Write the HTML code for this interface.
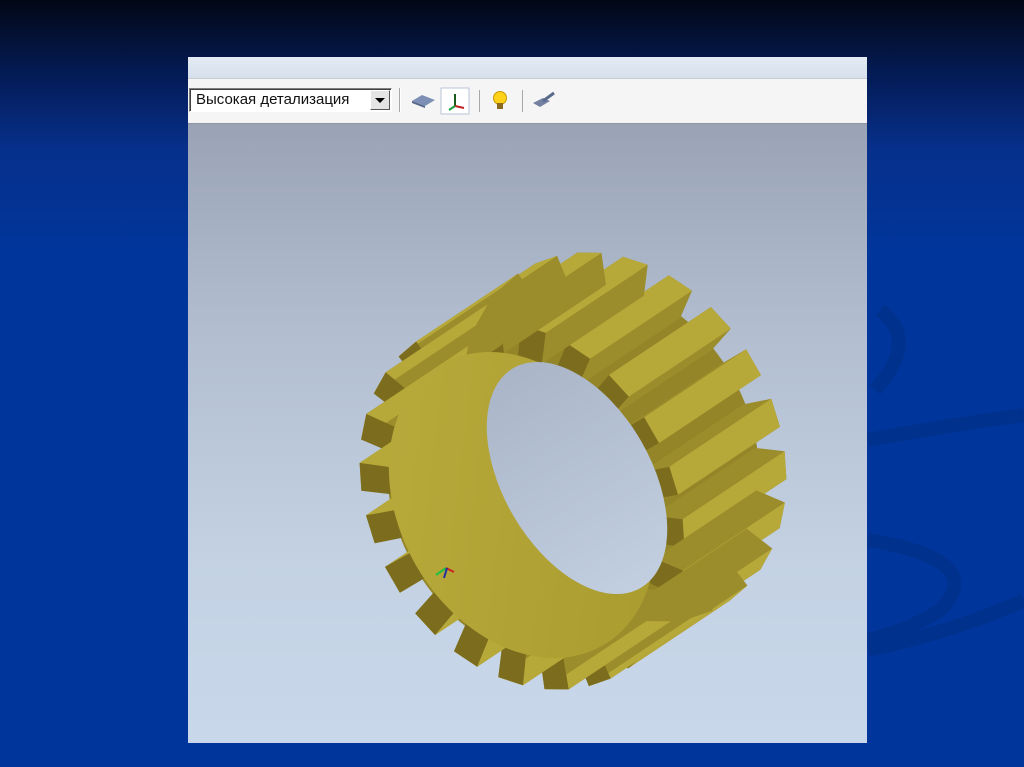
<!DOCTYPE html>
<html><head><meta charset="utf-8"><style>
html,body{margin:0;padding:0;width:1024px;height:767px;overflow:hidden}
body{background:linear-gradient(180deg,#020716 0px,#041a52 70px,#07308c 150px,#00369c 260px,#00369c 767px);position:relative;font-family:"Liberation Sans",sans-serif}
#deco{position:absolute;left:0;top:0}
#panel{position:absolute;left:188px;top:57px;width:679px;height:685px;background:#f3f3f3}
#strip{position:absolute;left:0;top:0;width:679px;height:21px;background:linear-gradient(#e4ebf3,#d6e0ec)}
#tb{position:absolute;left:0;top:21px;width:679px;height:43px;background:#f5f5f5;border-top:1px solid #c9ccd2}
#view{position:absolute;left:0;top:66px;width:679px;height:619px;background:linear-gradient(180deg,#9aa3b6 0%,#b3bfd1 35%,#c3d1e3 70%,#c8d8ea 100%);border-top:1px solid #8e96a3}
#combo{position:absolute;left:1px;top:9px;width:203px;height:24px;border:1px solid #7f7f7f;border-right-color:#fff;border-bottom-color:#fff;background:#fff;box-shadow:inset 1px 1px 0 #404040;font-size:15px;line-height:24px;box-sizing:border-box}
#combo span{position:absolute;left:6px;top:-1px;color:#111}
#btn{position:absolute;right:1px;top:1px;width:20px;height:20px;background:#e4e4e4;border:1px solid #fff;border-right-color:#555;border-bottom-color:#555;box-sizing:border-box}
#btn:after{content:"";position:absolute;left:4px;top:7px;border-left:5px solid transparent;border-right:5px solid transparent;border-top:5px solid #000}
.sep{position:absolute;top:9px;width:1px;height:24px;background:#a8a8a8;border-right:1px solid #fff}
</style></head><body>
<svg id="deco" width="1024" height="767">
<g fill="none" stroke="#00318c" stroke-width="14" opacity="0.9">
<path d="M880 310 Q920 340 875 390"/>
<path d="M868 440 Q950 425 1024 415"/>
<path d="M868 540 Q990 560 940 610 Q910 630 868 640"/>
<path d="M868 650 Q960 630 1024 600"/>
</g></svg>
<div id="panel">
<div id="strip"></div>
<div id="tb">
<div id="combo"><span>Высокая детализация</span><div id="btn"></div></div>
<div class="sep" style="left:211px"></div>
<svg style="position:absolute;left:220px;top:8px" width="160" height="28">
<polygon points="4,14 14,8 27,13 17,19" fill="#7d8fb5"/><polygon points="4,14 17,19 17,21 4,16" fill="#56668a"/>
<rect x="33" y="1" width="28" height="26" fill="#fff" stroke="#b9c4d6"/>
<path d="M47 7 L47 19" stroke="#1a5a1a" stroke-width="2"/><path d="M47 19 L56 21" stroke="#c02020" stroke-width="2"/><path d="M47 19 L41 23" stroke="#20a040" stroke-width="2"/>
<rect x="71" y="3" width="1" height="22" fill="#a8a8a8"/>
<circle cx="92" cy="11" r="6.5" fill="#ffd21a" stroke="#c79a00"/><rect x="89" y="16" width="6" height="6" fill="#8a6a20"/>
<rect x="114" y="3" width="1" height="22" fill="#a8a8a8"/>
<polygon points="125,16 135,11 142,14 132,20" fill="#7380a0"/><path d="M135 14 L146 6" stroke="#5a6a8c" stroke-width="3"/>
</svg>
</div>
<div id="view"></div>
</div>
<svg id="gear" width="1024" height="767" style="position:absolute;left:0;top:0"></svg>
<script>
(function(){
var NS="http://www.w3.org/2000/svg",g=document.getElementById('gear');
function el(t,a){var e=document.createElementNS(NS,t);for(var k in a)e.setAttribute(k,a[k]);g.appendChild(e);return e;}
var phi=-30*Math.PI/180,c=Math.cos(phi),s=Math.sin(phi);
var C1=[522,505],V=[102,-68];
function pt(C,a,b,t){var x=a*Math.cos(t),y=b*Math.sin(t);return [C[0]+x*c-y*s,C[1]+x*s+y*c];}
function add(p,v){return [p[0]+v[0],p[1]+v[1]];}
function poly(ps,f){el('polygon',{points:ps.map(function(p){return p[0].toFixed(1)+','+p[1].toFixed(1)}).join(' '),fill:f});}
function hull(P){P=P.slice().sort(function(a,b){return a[0]-b[0]||a[1]-b[1];});
 function cr(o,a,b){return (a[0]-o[0])*(b[1]-o[1])-(a[1]-o[1])*(b[0]-o[0]);}
 var lo=[],up=[];P.forEach(function(p){while(lo.length>=2&&cr(lo[lo.length-2],lo[lo.length-1],p)<=0)lo.pop();lo.push(p);});
 for(var i=P.length-1;i>=0;i--){var p=P[i];while(up.length>=2&&cr(up[up.length-2],up[up.length-1],p)<=0)up.pop();up.push(p);}
 lo.pop();up.pop();return lo.concat(up);}
for(var k=0;k<=12;k++){var C=[C1[0]+V[0]*k/12,C1[1]+V[1]*k/12];
 el('ellipse',{cx:C[0],cy:C[1],rx:124,ry:164,transform:'rotate(-30 '+C[0]+' '+C[1]+')',fill:'#948628'});}
var N=22,teeth=[];
for(var i=0;i<N;i++){var t=i*2*Math.PI/N,w=0.09;
 var rL=pt(C1,122,162,t-w),rR=pt(C1,122,162,t+w),tL=pt(C1,150,195,t-w*0.85),tR=pt(C1,150,195,t+w*0.85);
 var mid=pt([0,0],1,1,t);var d=mid[0]*V[0]/102+mid[1]*V[1]/102;
 teeth.push({rL:rL,rR:rR,tL:tL,tR:tR,d:d});}
teeth.sort(function(a,b){return b.d-a.d;});
teeth.forEach(function(T){
 var P=[T.rL,T.rR,T.tL,T.tR,add(T.rL,V),add(T.rR,V),add(T.tL,V),add(T.tR,V)];
 poly(hull(P),'#9c8d2c');
 poly([T.tL,T.tR,add(T.tR,V),add(T.tL,V)],'#b7a83a');
 poly([T.rL,T.tL,T.tR,T.rR],'#7c6d1e');
});
var df=el('defs',{});
df.innerHTML='<linearGradient id="ig" x1="0" y1="0" x2="1" y2="1"><stop offset="0" stop-color="#b9ab3c"/><stop offset="1" stop-color="#a99a2e"/></linearGradient><linearGradient id="hg" x1="0" y1="0" x2="0" y2="1"><stop offset="0" stop-color="#aab5c8"/><stop offset="1" stop-color="#c2cfe1"/></linearGradient>';
el('ellipse',{cx:C1[0],cy:C1[1],rx:122,ry:162,transform:'rotate(-30 '+C1[0]+' '+C1[1]+')',fill:'url(#ig)'});
el('ellipse',{cx:577,cy:478,rx:74,ry:127,transform:'rotate(-30 577 478)',fill:'url(#hg)'});
el('path',{d:'M436 575 L446 568',stroke:'#20c040','stroke-width':2});
el('path',{d:'M446 568 L454 572',stroke:'#d02020','stroke-width':2});
el('path',{d:'M444 578 L447 568',stroke:'#2030a0','stroke-width':2});
})();
</script>
</body></html>
